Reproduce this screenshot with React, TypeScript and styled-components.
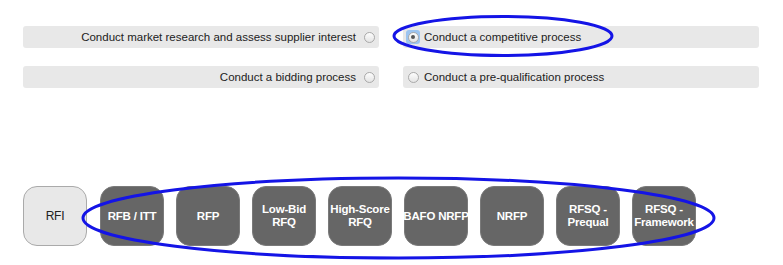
import React from "react";
import styled, { createGlobalStyle } from "styled-components";

const GlobalStyle = createGlobalStyle`
  body {
    margin: 0;
    background: #ffffff;
    font-family: "Liberation Sans", Arial, sans-serif;
  }
`;

const Page = styled.div`
  position: relative;
  width: 783px;
  height: 265px;
  padding: 26px 0 0 23px;
  box-sizing: border-box;
`;

const OptionGrid = styled.div`
  display: grid;
  grid-template-columns: 356px 356px;
  column-gap: 24px;
  row-gap: 18px;
`;

const Option = styled.label<{ $align: "left" | "right" }>`
  display: flex;
  align-items: center;
  justify-content: flex-end;
  flex-direction: ${(p) => (p.$align === "left" ? "row" : "row-reverse")};
  height: 22px;
  padding: 0 3px;
  gap: ${(p) => (p.$align === "left" ? "6px" : "4px")};
  background: #e8e8e8;
  border-radius: 3px;
  font-size: 11.5px;
  color: #222;
`;

const OptionText = styled.span<{ $align: "left" | "right" }>`
  margin-right: ${(p) => (p.$align === "left" ? "0" : "auto")};
`;

const RadioWrap = styled.span<{ $checked: boolean }>`
  display: flex;
  align-items: center;
  justify-content: center;
  width: 14px;
  height: 14px;
  border-radius: 3px;
  background: ${(p) => (p.$checked ? "#9cc4f0" : "transparent")};
`;

const Radio = styled.span<{ $checked: boolean }>`
  display: flex;
  align-items: center;
  justify-content: center;
  width: 9px;
  height: 9px;
  border-radius: 50%;
  border: 1px solid #a9a9a9;
  background: linear-gradient(#fdfdfd, #e4e4e4);
  &::after {
    content: "";
    display: ${(p) => (p.$checked ? "block" : "none")};
    width: 4px;
    height: 4px;
    border-radius: 50%;
    background: #555;
  }
`;

const TileRow = styled.div`
  display: flex;
  gap: 12px;
  margin-top: 98px;
`;

const Tile = styled.div<{ $active: boolean }>`
  display: flex;
  align-items: center;
  justify-content: center;
  flex: none;
  width: 64px;
  height: 60px;
  box-sizing: border-box;
  border-radius: 14px;
  border: 1px solid ${(p) => (p.$active ? "#aaaaaa" : "#7a7a7a")};
  background: ${(p) => (p.$active ? "#e8e8e8" : "#666666")};
  color: ${(p) => (p.$active ? "#222" : "#ffffff")};
  font-size: ${(p) => (p.$active ? "12px" : "11.5px")};
  font-weight: ${(p) => (p.$active ? "normal" : "bold")};
  line-height: 13px;
  text-align: center;
  white-space: nowrap;
  letter-spacing: -0.2px;
  &:first-child {
    margin-right: 1px;
  }
`;

const Annotation = styled.svg`
  position: absolute;
  top: 0;
  left: 0;
  width: 783px;
  height: 265px;
  pointer-events: none;
`;

const options = [
  { text: "Conduct market research and assess supplier interest", align: "left" as const, checked: false },
  { text: "Conduct a competitive process", align: "right" as const, checked: true },
  { text: "Conduct a bidding process", align: "left" as const, checked: false },
  { text: "Conduct a pre-qualification process", align: "right" as const, checked: false },
];

const tiles = [
  ["RFI"],
  ["RFB / ITT"],
  ["RFP"],
  ["Low-Bid", "RFQ"],
  ["High-Score", "RFQ"],
  ["BAFO NRFP"],
  ["NRFP"],
  ["RFSQ -", "Prequal"],
  ["RFSQ -", "Framework"],
];

export default function App() {
  return (
    <>
      <GlobalStyle />
      <Page>
        <OptionGrid>
          {options.map((o) => (
            <Option key={o.text} $align={o.align}>
              <OptionText $align={o.align}>{o.text}</OptionText>
              <RadioWrap $checked={o.checked}>
                <Radio $checked={o.checked} />
              </RadioWrap>
            </Option>
          ))}
        </OptionGrid>
        <TileRow>
          {tiles.map((lines, i) => (
            <Tile key={lines.join(" ")} $active={i === 0}>
              <span>
                {lines.map((l, j) => (
                  <React.Fragment key={l}>
                    {j > 0 && <br />}
                    {l}
                  </React.Fragment>
                ))}
              </span>
            </Tile>
          ))}
        </TileRow>
        <Annotation viewBox="0 0 783 265">
          <ellipse cx="503" cy="36" rx="109" ry="19.5" fill="none" stroke="#1414e6" strokeWidth="3" />
          <ellipse cx="398.5" cy="218" rx="315.5" ry="40" fill="none" stroke="#1414e6" strokeWidth="3" />
        </Annotation>
      </Page>
    </>
  );
}
